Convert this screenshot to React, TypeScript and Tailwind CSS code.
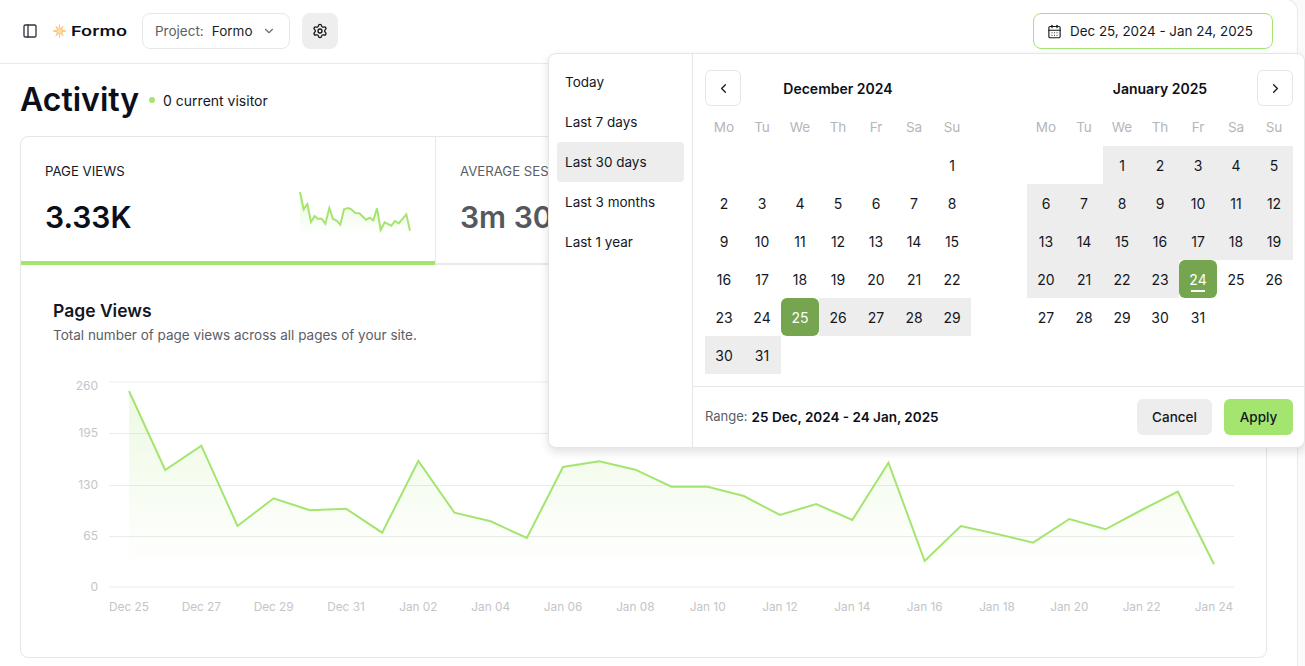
import { CalendarDays, ChevronDown, ChevronLeft, ChevronRight, PanelLeft, Settings } from "lucide-react";

const font = "font-['Inter','Liberation_Sans',sans-serif]";

const presets = ["Today", "Last 7 days", "Last 30 days", "Last 3 months", "Last 1 year"];
const weekdays = ["Mo", "Tu", "We", "Th", "Fr", "Sa", "Su"];

// 0 = empty cell, rest is day of month
const december = [0, 0, 0, 0, 0, 0, 1, ...range(2, 31)];
const january = [0, 0, ...range(1, 31)];

function range(from: number, to: number) {
  const out: number[] = [];
  for (let i = from; i <= to; i++) out.push(i);
  return out;
}

// pixel y of each daily point, read off the chart
const lineY = [391, 470, 445.7, 526, 498.3, 510.3, 508.7, 532.7, 461, 512.7, 521.3, 538, 467, 461.3, 469.7, 486.7, 486.7, 496, 515, 504, 520, 462.7, 561, 526, 534, 542.7, 519, 529.3, 510, 491.7, 564.3];
const xLabels = ["Dec 25", "Dec 27", "Dec 29", "Dec 31", "Jan 02", "Jan 04", "Jan 06", "Jan 08", "Jan 10", "Jan 12", "Jan 14", "Jan 16", "Jan 18", "Jan 20", "Jan 22", "Jan 24"];
const yLabels = [260, 195, 130, 65, 0];

const sparkPoints = "60,36 71,88 82,72 93,126 104,108 113,116 125,116 136,131 148,84 159,117 170,122 181,134 192,88 204,84 214,88 226,99 238,100 258,119 269,113 280,121 291,85 302,150 314,127 334,137 345,123 356,130 379,103 390,152";

function Logo() {
  return (
    <div className="flex items-center gap-[4px]">
      <svg width="15" height="16" viewBox="0 0 16 16">
        <defs>
          <radialGradient id="star">
            <stop offset="0%" stopColor="#fde5b4" />
            <stop offset="100%" stopColor="#f7a94b" />
          </radialGradient>
        </defs>
        <path
          d="M8 0 L9 5 L12.5 2 L10.8 6.4 L16 8 L10.8 9.6 L12.5 14 L9 11 L8 16 L7 11 L3.5 14 L5.2 9.6 L0 8 L5.2 6.4 L3.5 2 L7 5 Z"
          fill="url(#star)"
        />
      </svg>
      <span className="block w-[55px] origin-left scale-x-[1.4] text-[13px] leading-none font-semibold text-[#0b0f19]">Formo</span>
    </div>
  );
}

function Header() {
  return (
    <header className="h-[64px] shrink-0 flex items-center pb-px pl-[22px] pr-[24px] border-b border-[#e9e9e9]">
      <PanelLeft className="size-[16px] text-[#30343f]" strokeWidth={2} />
      <div className="ml-[14px]">
        <Logo />
      </div>
      <button className="ml-[16px] h-[36px] w-[148px] flex items-center pl-[12px] rounded-[8px] border border-[#e8e8e8] text-[13.5px]">
        <span className="text-[#5b5e66]">Project:</span>
        <span className="ml-[8px] text-[#1c1f26]">Formo</span>
        <ChevronDown className="ml-[10px] size-[14px] text-[#6c6f76]" />
      </button>
      <button className="ml-[12px] size-[36px] flex items-center justify-center rounded-[8px] bg-[#eeeeee]">
        <Settings className="size-[16px] text-[#14171f]" strokeWidth={2} />
      </button>
      <button className="ml-auto h-[36px] w-[240px] flex items-center pl-[13px] rounded-[8px] border border-[#a4e56f] text-[13.4px] text-[#14171f]">
        <CalendarDays className="size-[15px]" strokeWidth={1.8} />
        <span className="ml-[8px]">Dec 25, 2024 - Jan 24, 2025</span>
      </button>
    </header>
  );
}

function StatTabs() {
  return (
    <div className="flex h-[128px] border-b-2 border-[#e9e9e9]">
      <div className="relative w-[415px] pl-[24px] pt-[26px] border-r border-[#e9e9e9]">
        <div className="text-[13.2px] leading-[16px] text-[#14171f]">PAGE VIEWS</div>
        <div className="mt-[20px] text-[30px] leading-[36px] font-semibold text-[#0b0f19]">3.33K</div>
        <div className="absolute left-0 right-0 -bottom-[2px] h-[4px] bg-[#a4e56f]" />
        <svg className="absolute left-[259px] top-[43px]" width="150" height="70" viewBox="0 0 450 210">
          <defs>
            <linearGradient id="spark" x1="0" y1="0" x2="0" y2="1">
              <stop offset="0%" stopColor="#a4e56f" stopOpacity="0.25" />
              <stop offset="100%" stopColor="#a4e56f" stopOpacity="0" />
            </linearGradient>
          </defs>
          <polygon points={`60,165 ${sparkPoints} 390,165`} fill="url(#spark)" />
          <polyline points={sparkPoints} fill="none" stroke="#a4e56f" strokeWidth="6" />
        </svg>
      </div>
      <div className="flex-1 pl-[24px] pt-[26px] overflow-hidden whitespace-nowrap">
        <div className="text-[13.2px] leading-[16px] text-[#5b5e66]">AVERAGE SESSION</div>
        <div className="mt-[20px] text-[30px] leading-[36px] font-semibold text-[#55585f]">3m 30s</div>
      </div>
    </div>
  );
}

function Chart() {
  const x0 = 129;
  const step = (1214 - 129) / 30;
  const yOf = (v: number) => 587 - (v / 260) * 205;
  const line = lineY.map((y, i) => `${x0 + i * step},${y}`).join(" ");
  return (
    <svg className="absolute left-0 top-0 font-['Inter',sans-serif]" width="1305" height="666" viewBox="0 0 1305 666">
      <defs>
        <linearGradient id="area" x1="0" y1="0" x2="0" y2="1">
          <stop offset="0%" stopColor="#a4e56f" stopOpacity="0.2" />
          <stop offset="90%" stopColor="#a4e56f" stopOpacity="0" />
        </linearGradient>
      </defs>
      {yLabels.map((v) => {
        // top and bottom rules sit across two pixels, the others on one
        const edge = v === 260 || v === 0;
        const y = edge ? yOf(v) : Math.round(yOf(v)) + 0.5;
        return (
          <g key={v}>
            <line x1="109" x2="1234" y1={y} y2={y} stroke="#ebebeb" />
            <text x="98" y={yOf(v) + (v === 260 ? 8 : 4)} textAnchor="end" fontSize="12" fill="#c4c5c8">
              {v}
            </text>
          </g>
        );
      })}
      <polygon points={`${x0},${yOf(0)} ${line} 1214,${yOf(0)}`} fill="url(#area)" />
      <polyline points={line} fill="none" stroke="#a4e56f" strokeWidth="2" />
      {xLabels.map((l, i) => (
        <text key={l} x={x0 + i * 2 * step} y="611" textAnchor="middle" fontSize="11.8" fill="#c4c5c8">
          {l}
        </text>
      ))}
    </svg>
  );
}

function Month({ days, start, end, title }: { days: number[]; start?: number; end?: number; title: string }) {
  return (
    <div className="w-[266px]">
      <div className="h-[36px] flex items-center justify-center text-[14px] font-semibold text-[#0b0f19]">{title}</div>
      <div className="mt-[2px] grid grid-cols-[repeat(7,38px)] h-[38px] items-center">
        {weekdays.map((d) => (
          <div key={d} className="text-center text-[13.5px] text-[#b5b6b9]">
            {d}
          </div>
        ))}
      </div>
      <div className="grid grid-cols-[repeat(7,38px)] auto-rows-[38px]">
        {days.map((d, i) => {
          if (!d) return <div key={i} />;
          const isEdge = d === start || d === end;
          const inRange = (start !== undefined && d > start) || (end !== undefined && d < end);
          return (
            <div
              key={i}
              className={`relative flex items-center justify-center text-[14px] ${
                isEdge ? "bg-[#76a54f] text-white rounded-[6px]" : inRange ? "bg-[#ededed] text-[#14171f]" : "text-[#14171f]"
              }`}
            >
              {d}
              {d === end && <span className="absolute left-[12px] right-[12px] bottom-[6px] h-[2px] bg-white" />}
            </div>
          );
        })}
      </div>
    </div>
  );
}

function DatePopover() {
  return (
    <div className="absolute left-[548px] top-[53px] w-[757px] h-[395px] flex bg-white border border-[#e6e6e6] rounded-[8px] shadow-[0_4px_10px_rgba(0,0,0,0.12)]">
      <div className="w-[144px] shrink-0 border-r border-[#e6e6e6] px-[8px] pt-[8px]">
        {presets.map((p) => (
          <div
            key={p}
            className={`h-[40px] flex items-center pl-[8px] rounded-[4px] text-[13.5px] text-[#14171f] ${p === "Last 30 days" ? "bg-[#ededed]" : ""}`}
          >
            {p}
          </div>
        ))}
      </div>
      <div className="flex-1 flex flex-col min-w-0">
        <div className="relative h-[333px] border-b border-[#e6e6e6] pl-[12px] pt-[16px] flex gap-[56px]">
          <Month days={december} start={25} title="December 2024" />
          <Month days={january} end={24} title="January 2025" />
          <button className="absolute left-[12px] top-[16px] size-[36px] flex items-center justify-center rounded-[6px] border border-[#e6e6e6] bg-white">
            <ChevronLeft className="size-[15px] text-[#14171f]" />
          </button>
          <button className="absolute right-[11px] top-[16px] size-[36px] flex items-center justify-center rounded-[6px] border border-[#e6e6e6] bg-white">
            <ChevronRight className="size-[15px] text-[#14171f]" />
          </button>
        </div>
        <div className="flex-1 flex items-center pl-[12px] pr-[11px] text-[13.5px]">
          <span className="text-[13px] text-[#5b5e66]">Range:</span>
          <span className="ml-[4px] font-semibold text-[#0b0f19]">25 Dec, 2024 - 24 Jan, 2025</span>
          <button className="ml-auto h-[36px] w-[75px] rounded-[6px] bg-[#ededed] font-medium text-[#14171f]">Cancel</button>
          <button className="ml-[12px] h-[36px] w-[69px] rounded-[6px] bg-[#a4e56f] font-medium text-[#14171f]">Apply</button>
        </div>
      </div>
    </div>
  );
}

export default function App() {
  return (
    <div className={`relative w-[1305px] h-[666px] overflow-hidden bg-[#fafafa] ${font}`}>
      <div className="-mt-px h-[667px] w-[1298px] bg-white border-t border-r border-[#e9e9e9] rounded-tr-[12px] flex flex-col">
        <Header />
        <main className="px-[20px] flex-1 min-h-0">
          <div className="h-[72px] flex items-center">
            <h1 className="text-[32px] leading-none font-semibold text-[#0b0f19]">Activity</h1>
            <span className="ml-[10px] size-[6px] rounded-full bg-[#a4e56f]" />
            <span className="ml-[8px] text-[14px] text-[#14171f]">0 current visitor</span>
          </div>
          <div className="w-[1247px] h-[522px] border border-[#e6e6e6] rounded-[8px] overflow-hidden">
            <StatTabs />
            <div className="pl-[32px] pt-[35px]">
              <h2 className="text-[17.5px] leading-[22px] font-semibold text-[#14171f]">Page Views</h2>
              <p className="mt-[3px] text-[13.5px] leading-[20px] text-[#5b5e66]">Total number of page views across all pages of your site.</p>
            </div>
          </div>
        </main>
      </div>
      <Chart />
      <DatePopover />
    </div>
  );
}
